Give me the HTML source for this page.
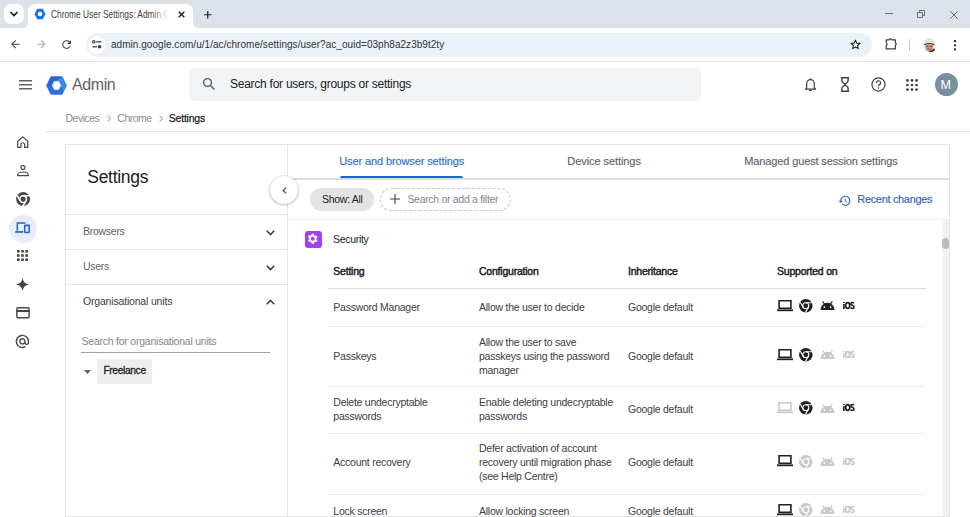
<!DOCTYPE html>
<html><head><meta charset="utf-8">
<style>
*{box-sizing:border-box;margin:0;padding:0}
html,body{width:970px;height:517px;overflow:hidden;background:#fff;font-family:"Liberation Sans",sans-serif;color:#202124}
.a{position:absolute;white-space:nowrap}
svg{position:absolute;overflow:visible}
</style></head><body>
<div class="a" style="left:0px;top:0px;width:970px;height:28px;background:#dce2ea;"></div>
<div class="a" style="left:4px;top:4px;width:20px;height:20px;background:#fbfcfd;border-radius:7px"></div>
<svg style="left:9px;top:10px" width="10" height="8" viewBox="0 0 10 8"><path d="M1.5 2 L5 5.5 L8.5 2" fill="none" stroke="#1f1f1f" stroke-width="1.7"/></svg>
<svg style="left:20px;top:4px" width="182" height="25" viewBox="0 0 182 25"><path d="M0 25 Q8 25 8 17 V8 Q8 0 16 0 H165 Q173 0 173 8 V17 Q173 25 181 25 Z" fill="#fff"/></svg>
<svg style="left:34px;top:8px" width="12" height="12" viewBox="0 0 24 24"><path d="M6.5 1.5 H17.5 L23 12 L17.5 22.5 H6.5 L1 12 Z" fill="#1a73e8"/><circle cx="12" cy="12" r="4.6" fill="#fff"/></svg>
<div class="a" style="left:51px;top:6px;width:120px;height:16px;overflow:hidden">
<div class="a" style="left:0px;top:2.47px;font-size:10.2px;line-height:14px;color:#3c4043;font-weight:400;letter-spacing:0px;transform:scaleX(0.82);transform-origin:0 0;">Chrome User Settings: Admin Console</div>
</div>
<div class="a" style="left:151px;top:6px;width:20px;height:16px;background:linear-gradient(90deg,rgba(255,255,255,0),#fff 90%);"></div>
<svg style="left:178px;top:11px" width="7" height="7" viewBox="0 0 7 7"><path d="M0.7 0.7 L6.3 6.3 M6.3 0.7 L0.7 6.3" stroke="#1f1f1f" stroke-width="1.4"/></svg>
<svg style="left:203.5px;top:10.7px" width="7.5" height="7.5" viewBox="0 0 7.5 7.5"><path d="M3.75 0 V7.5 M0 3.75 H7.5" stroke="#1f1f1f" stroke-width="1.2"/></svg>
<svg style="left:885px;top:13px" width="8" height="1" viewBox="0 0 8 1"><path d="M0 0.5 H8" stroke="#6b6e73" stroke-width="1"/></svg>
<svg style="left:917px;top:10px" width="8" height="8" viewBox="0 0 8 8"><path d="M0.5 2.5 H5.5 V7.5 H0.5 Z M2.5 2.5 V0.5 H7.5 V5.5 H5.5" fill="none" stroke="#6b6e73" stroke-width="1"/></svg>
<svg style="left:950px;top:10.5px" width="8" height="8" viewBox="0 0 8 8"><path d="M0.3 0.3 L7.7 7.7 M7.7 0.3 L0.3 7.7" stroke="#6b6e73" stroke-width="1"/></svg>
<div class="a" style="left:0px;top:28px;width:970px;height:33px;background:#fff;border-radius:5px 5px 0 0"></div>
<div class="a" style="left:0px;top:61px;width:970px;height:1px;background:#e3e3e3;"></div>
<svg style="left:9.4px;top:38.2px" width="12.7" height="12.7" viewBox="0 0 24 24"><path d="M20 11H7.83l5.59-5.59L12 4l-8 8 8 8 1.41-1.41L7.83 13H20v-2z" fill="#474747"/></svg>
<svg style="left:34.9px;top:38.2px" width="12.7" height="12.7" viewBox="0 0 24 24"><path d="M4 11h12.17l-5.59-5.59L12 4l8 8-8 8-1.41-1.41L16.17 13H4v-2z" fill="#a8abaf"/></svg>
<svg style="left:60.1px;top:37.8px" width="13.2" height="13.2" viewBox="0 0 24 24"><path d="M17.65 6.35C16.2 4.9 14.21 4 12 4c-4.42 0-7.99 3.58-7.99 8s3.57 8 7.99 8c3.73 0 6.84-2.55 7.73-6h-2.08c-.82 2.33-3.04 4-5.65 4-3.31 0-6-2.69-6-6s2.69-6 6-6c1.66 0 3.14.69 4.22 1.78L13 11h7V4l-2.35 2.35z" fill="#474747"/></svg>
<div class="a" style="left:86px;top:33px;width:786px;height:23.5px;background:#ebf1f9;border-radius:12px"></div>
<div class="a" style="left:88px;top:36px;width:18px;height:18px;background:#fff;border-radius:9px"></div>
<svg style="left:92px;top:40px" width="10" height="9" viewBox="0 0 10 9"><circle cx="1.8" cy="1.8" r="1.2" fill="none" stroke="#3c4043" stroke-width="1.1"/><path d="M4.2 1.8 H9.5" stroke="#3c4043" stroke-width="1.3"/><path d="M0.5 6.8 H5" stroke="#3c4043" stroke-width="1.3"/><circle cx="7.6" cy="6.8" r="1.8" fill="#3c4043"/></svg>
<div class="a" style="left:111px;top:37.73px;font-size:10px;line-height:14px;color:#303236;font-weight:400;letter-spacing:0.04px;">admin.google.com/u/1/ac/chrome/settings/user?ac_ouid=03ph8a2z3b9t2ty</div>
<svg style="left:849.5px;top:39.3px" width="11" height="11" viewBox="0 0 24 24"><path d="M12 2.5 L14.8 9 L21.8 9.6 L16.5 14.2 L18.1 21 L12 17.4 L5.9 21 L7.5 14.2 L2.2 9.6 L9.2 9 Z" fill="none" stroke="#1f1f1f" stroke-width="2.3" stroke-linejoin="round"/></svg>
<svg style="left:884.5px;top:38.3px" width="12" height="12" viewBox="0 0 12 12"><path d="M1.2 1.9 H4 Q5.3 0 6.6 1.9 H10.4 V5 Q12.3 6 10.4 7 V10.8 H1.2 V7.6 Q3 6 1.2 4.4 Z" fill="none" stroke="#3c4043" stroke-width="1.25" stroke-linejoin="round"/></svg>
<div class="a" style="left:909px;top:39px;width:1px;height:12px;background:#c7c7c7;"></div>
<svg style="left:921.5px;top:37.5px" width="14.5" height="14.5" viewBox="0 0 30 30"><defs><clipPath id="cp"><circle cx="15" cy="15" r="15"/></clipPath></defs><g clip-path="url(#cp)"><rect width="30" height="30" fill="#f4f1ee"/><path d="M7 14 Q6 27 15 28 Q24 27 23 14 Z" fill="#c48f79"/><path d="M4 13 Q5 1 15 1 Q26 1 26 13 Q15 9 4 13 Z" fill="#e4e0dc"/><path d="M4 13 Q15 8 26 13 L26 15 Q15 10.5 4 15 Z" fill="#4a3a34"/><path d="M16 27 Q22 26 25 21 L30 30 H14 Z" fill="#211a18"/><rect x="9" y="16.5" width="4" height="1.6" fill="#4a3630"/><rect x="17" y="16.5" width="4" height="1.6" fill="#4a3630"/><path d="M11 22.5 Q15 24 19 22.5" stroke="#6b4537" stroke-width="1.2" fill="none"/></g></svg>
<svg style="left:952.5px;top:39.5px" width="4" height="11" viewBox="0 0 4 11"><circle cx="2" cy="1.2" r="1.15" fill="#1f1f1f"/><circle cx="2" cy="5.3" r="1.15" fill="#1f1f1f"/><circle cx="2" cy="9.4" r="1.15" fill="#1f1f1f"/></svg>
<svg style="left:19px;top:80px" width="13" height="9.5" viewBox="0 0 13 9.5"><path d="M0 0.8 H13 M0 4.75 H13 M0 8.7 H13" stroke="#5f6368" stroke-width="1.6"/></svg>
<svg style="left:46.3px;top:76px" width="21" height="19" viewBox="0 0 21 19"><path d="M5.2 1 H15.8 L20 9.5 L15.8 18 H5.2 L1 9.5 Z" fill="#2f6fe0" stroke="#2f6fe0" stroke-width="1.6" stroke-linejoin="round"/><path d="M5.2 1 H15.8 L17.5 4.5 L9 4.8 L6.5 9.5 H1 Z" fill="#2a66d8" stroke="#2a66d8" stroke-width="0" /><path d="M15.8 1 L20 9.5 L17.9 13.7 L13 9.5 L10.5 4.6 Z" fill="#4587f2"/><path d="M8.3 5.6 H12.7 L14.6 9.5 L12.7 13.4 H8.3 L6.4 9.5 Z" fill="#fff" stroke="#fff" stroke-width="0.6" stroke-linejoin="round"/></svg>
<div class="a" style="left:72px;top:73.96px;font-size:16px;line-height:22px;color:#5f6368;font-weight:400;letter-spacing:-0.4px;">Admin</div>
<div class="a" style="left:189px;top:68px;width:512px;height:33px;background:#f1f3f4;border-radius:5px"></div>
<svg style="left:202px;top:77px" width="14" height="14" viewBox="0 0 24 24"><circle cx="9.5" cy="9.5" r="6.8" fill="none" stroke="#5f6368" stroke-width="2.4"/><path d="M14.5 14.5 L21.5 21.5" stroke="#5f6368" stroke-width="2.6"/></svg>
<div class="a" style="left:230px;top:75.94px;font-size:12px;line-height:17px;color:#202124;font-weight:400;letter-spacing:-0.25px;">Search for users, groups or settings</div>
<svg style="left:804px;top:77px" width="13" height="15" viewBox="0 0 24 26"><path d="M5 19 V11 A7 7 0 0 1 19 11 V19 L21.5 21.5 H2.5 Z" fill="none" stroke="#3c4043" stroke-width="2.2" stroke-linejoin="round"/><path d="M12 1.5 V4" stroke="#3c4043" stroke-width="2.2"/><path d="M9.5 24 H14.5" stroke="#3c4043" stroke-width="2.4"/></svg>
<svg style="left:840px;top:77px" width="10" height="15" viewBox="0 0 16 24"><path d="M1.5 1.2 H14.5 M1.5 22.8 H14.5" stroke="#3c4043" stroke-width="2.4"/><path d="M3 1.2 V6 C3 9 8 10.5 8 12 C8 13.5 3 15 3 18 V22.8 M13 1.2 V6 C13 9 8 10.5 8 12 C8 13.5 13 15 13 18 V22.8" fill="none" stroke="#3c4043" stroke-width="2.2"/></svg>
<svg style="left:871px;top:77px" width="15" height="15" viewBox="0 0 24 24"><circle cx="12" cy="12" r="10.5" fill="none" stroke="#3c4043" stroke-width="1.9"/><path d="M8.6 9.4 A3.4 3.4 0 1 1 13.3 12.6 C12.5 13 12 13.6 12 14.6" fill="none" stroke="#3c4043" stroke-width="1.9"/><circle cx="12" cy="17.6" r="1.25" fill="#3c4043"/></svg>
<svg style="left:906px;top:79px" width="12" height="12" viewBox="0 0 12 12"><g fill="#3c4043"><circle cx="1.4" cy="1.4" r="1.35"/><circle cx="1.4" cy="6" r="1.35"/><circle cx="1.4" cy="10.6" r="1.35"/><circle cx="6" cy="1.4" r="1.35"/><circle cx="6" cy="6" r="1.35"/><circle cx="6" cy="10.6" r="1.35"/><circle cx="10.6" cy="1.4" r="1.35"/><circle cx="10.6" cy="6" r="1.35"/><circle cx="10.6" cy="10.6" r="1.35"/></g></svg>
<div class="a" style="left:935px;top:73px;width:23px;height:23px;background:#78909c;border-radius:50%"></div>
<div class="a" style="left:940.5px;top:76.37px;font-size:12.5px;line-height:18px;color:#fff;font-weight:400;letter-spacing:0px;">M</div>
<div class="a" style="left:65.5px;top:110.56px;font-size:10.5px;line-height:15px;color:#8a8e93;font-weight:400;letter-spacing:-0.5px;">Devices</div>
<svg style="left:106.5px;top:115px" width="5" height="7" viewBox="0 0 5 7"><path d="M0.8 0.6 L3.6 3.5 L0.8 6.4" fill="none" stroke="#8a8e93" stroke-width="1"/></svg>
<div class="a" style="left:117.3px;top:110.56px;font-size:10.5px;line-height:15px;color:#8a8e93;font-weight:400;letter-spacing:-0.5px;">Chrome</div>
<svg style="left:158.5px;top:115px" width="5" height="7" viewBox="0 0 5 7"><path d="M0.8 0.6 L3.6 3.5 L0.8 6.4" fill="none" stroke="#8a8e93" stroke-width="1"/></svg>
<div class="a" style="left:168.8px;top:110.56px;font-size:10.5px;line-height:15px;color:#202124;font-weight:400;letter-spacing:-0.22px;-webkit-text-stroke:0.25px #202124">Settings</div>
<div class="a" style="left:46px;top:131px;width:924px;height:1px;background:#e0e0e0;"></div>
<div class="a" style="left:8.75px;top:215.2px;width:28px;height:28px;background:#e9edfb;border-radius:50%"></div>
<svg style="left:17px;top:136px" width="11.5" height="12" viewBox="0 0 11.5 12"><path d="M0.7 5.2 L5.75 0.9 L10.8 5.2 V11.4 H7.6 V8.6 A1.85 1.85 0 0 0 3.9 8.6 V11.4 H0.7 Z" fill="none" stroke="#474747" stroke-width="1.2" stroke-linejoin="round"/></svg>
<svg style="left:17px;top:165px" width="12" height="11.5" viewBox="0 0 12 11.5"><circle cx="6" cy="2.55" r="2" fill="none" stroke="#474747" stroke-width="1.2"/><path d="M0.7 10.7 V9.8 C0.7 8 3.4 7 6 7 C8.6 7 11.3 8 11.3 9.8 V10.7 Z" fill="none" stroke="#474747" stroke-width="1.2" stroke-linejoin="round"/></svg>
<svg style="left:15.5px;top:191.8px" width="14.2" height="14.2" viewBox="0 0 24 24"><circle cx="12" cy="12" r="11.8" fill="#474747"/><circle cx="12" cy="12" r="5.6" fill="none" stroke="#fff" stroke-width="2.6"/><circle cx="12" cy="12" r="3.6" fill="#474747"/><path d="M12 6.3 H23.5" stroke="#fff" stroke-width="2.6"/><path d="M7.1 14.9 L1.4 5" stroke="#fff" stroke-width="2.6"/><path d="M16.9 14.9 L11.2 24.5" stroke="#fff" stroke-width="2.6"/></svg>
<svg style="left:15px;top:222px" width="15" height="11" viewBox="0 0 24 18"><path d="M3.5 14 V1.5 H17" fill="none" stroke="#1967d2" stroke-width="2.5"/><path d="M0 16.3 H13" stroke="#1967d2" stroke-width="2.8"/><rect x="15.6" y="5.5" width="7.2" height="11.6" rx="0.6" fill="none" stroke="#1967d2" stroke-width="2.5"/></svg>
<svg style="left:17px;top:250px" width="11" height="11" viewBox="0 0 11 11"><g fill="#474747"><rect x="0" y="0" width="2.6" height="2.6"/><rect x="0" y="4.2" width="2.6" height="2.6"/><rect x="0" y="8.4" width="2.6" height="2.6"/><rect x="4.2" y="0" width="2.6" height="2.6"/><rect x="4.2" y="4.2" width="2.6" height="2.6"/><rect x="4.2" y="8.4" width="2.6" height="2.6"/><rect x="8.4" y="0" width="2.6" height="2.6"/><rect x="8.4" y="4.2" width="2.6" height="2.6"/><rect x="8.4" y="8.4" width="2.6" height="2.6"/></g></svg>
<svg style="left:16px;top:278px" width="13" height="13" viewBox="0 0 24 24"><path d="M12 0 C13 7 17 11 24 12 C17 13 13 17 12 24 C11 17 7 13 0 12 C7 11 11 7 12 0 Z" fill="#474747"/></svg>
<svg style="left:15.5px;top:306.5px" width="14" height="11.5" viewBox="0 0 24 20"><rect x="1.3" y="1.3" width="21.4" height="17.4" rx="2" fill="none" stroke="#474747" stroke-width="2.5"/><path d="M1 7 H23" stroke="#474747" stroke-width="3.6"/></svg>
<svg style="left:15.3px;top:334px" width="14.8" height="14.8" viewBox="0 0 24 24"><path d="M16.2 12 A4.2 4.2 0 1 1 16.2 11.9 V14 A2.7 2.7 0 0 0 21.8 14 V12 A9.8 9.8 0 1 0 16.8 20.6" fill="none" stroke="#474747" stroke-width="2.3"/></svg>
<div class="a" style="left:65px;top:144px;width:885px;height:380px;background:transparent;border:1px solid #e4e4e4;box-sizing:border-box"></div>
<div class="a" style="left:287px;top:144px;width:1px;height:380px;background:#e4e4e4;"></div>
<div class="a" style="left:87.3px;top:164.54px;font-size:17.5px;line-height:24px;color:#202124;font-weight:400;letter-spacing:-0.3px;">Settings</div>
<div class="a" style="left:65px;top:214px;width:222px;height:1px;background:#e4e4e4;"></div>
<div class="a" style="left:65px;top:249px;width:222px;height:1px;background:#e4e4e4;"></div>
<div class="a" style="left:65px;top:284px;width:222px;height:1px;background:#e4e4e4;"></div>
<div class="a" style="left:83px;top:224.16px;font-size:10.5px;line-height:15px;color:#5f6368;font-weight:400;letter-spacing:-0.27px;">Browsers</div>
<div class="a" style="left:83px;top:259.16px;font-size:10.5px;line-height:15px;color:#5f6368;font-weight:400;letter-spacing:-0.27px;">Users</div>
<div class="a" style="left:83px;top:293.86px;font-size:10.5px;line-height:15px;color:#3c4043;font-weight:400;letter-spacing:-0.18px;">Organisational units</div>
<svg style="left:265.5px;top:229.5px" width="9" height="6" viewBox="0 0 9 6"><path d="M0.8 0.8 L4.5 4.5 L8.2 0.8" fill="none" stroke="#3c4043" stroke-width="1.6"/></svg>
<svg style="left:265.5px;top:264.5px" width="9" height="6" viewBox="0 0 9 6"><path d="M0.8 0.8 L4.5 4.5 L8.2 0.8" fill="none" stroke="#3c4043" stroke-width="1.6"/></svg>
<svg style="left:265.5px;top:298.5px" width="9" height="6" viewBox="0 0 9 6"><path d="M0.8 5.2 L4.5 1.5 L8.2 5.2" fill="none" stroke="#3c4043" stroke-width="1.6"/></svg>
<div class="a" style="left:81.5px;top:334.26px;font-size:10.5px;line-height:15px;color:#80868b;font-weight:400;letter-spacing:-0.23px;">Search for organisational units</div>
<div class="a" style="left:81px;top:352px;width:189px;height:1px;background:#9aa0a6;"></div>
<svg style="left:84px;top:370px" width="7" height="4" viewBox="0 0 7 4"><path d="M0 0 H7 L3.5 4 Z" fill="#5f6368"/></svg>
<div class="a" style="left:97px;top:358.5px;width:55px;height:25.5px;background:#eeeeee;"></div>
<div class="a" style="left:103.4px;top:363.87px;font-size:10.2px;line-height:14px;color:#202124;font-weight:400;letter-spacing:-0.33px;-webkit-text-stroke:0.3px #202124">Freelance</div>
<div class="a" style="left:288px;top:178px;width:661px;height:1.5px;background:#dcdcdc;"></div>
<div class="a" style="left:339.3px;top:153.79px;font-size:11px;line-height:15px;color:#2a6fd8;font-weight:400;letter-spacing:-0.12px;-webkit-text-stroke:0.15px #2a6fd8">User and browser settings</div>
<div class="a" style="left:339.5px;top:175.7px;width:123px;height:2.8px;background:#1b67d3;border-radius:3px 3px 0 0"></div>
<div class="a" style="left:567.3px;top:153.79px;font-size:11px;line-height:15px;color:#5f6368;font-weight:400;letter-spacing:-0.07px;-webkit-text-stroke:0.15px #5f6368">Device settings</div>
<div class="a" style="left:744.3px;top:153.79px;font-size:11px;line-height:15px;color:#5f6368;font-weight:400;letter-spacing:-0.13px;-webkit-text-stroke:0.15px #5f6368">Managed guest session settings</div>
<div class="a" style="left:310px;top:188px;width:63.5px;height:22.5px;background:#e3e3e3;border-radius:12px"></div>
<div class="a" style="left:322px;top:191.66px;font-size:10.5px;line-height:15px;color:#202124;font-weight:400;letter-spacing:-0.3px;">Show: All</div>
<div class="a" style="left:379.5px;top:188px;width:131px;height:22.5px;background:transparent;border:1px dashed #c6c6c6;border-radius:12px;box-sizing:border-box"></div>
<svg style="left:389.5px;top:194px" width="10" height="10" viewBox="0 0 10 10"><path d="M5 0 V10 M0 5 H10" stroke="#3c4043" stroke-width="1.1"/></svg>
<div class="a" style="left:407.4px;top:191.66px;font-size:10.5px;line-height:15px;color:#80868b;font-weight:400;letter-spacing:-0.3px;">Search or add a filter</div>
<svg style="left:838.4px;top:193.5px" width="13.5" height="13.5" viewBox="0 0 24 24"><path fill="#3560c4" d="M13 3c-4.97 0-9 4.03-9 9H1l3.89 3.89.07.14L9 12H6c0-3.87 3.13-7 7-7s7 3.13 7 7-3.13 7-7 7c-1.93 0-3.68-.79-4.94-2.06l-1.42 1.42C8.27 19.99 10.51 21 13 21c4.97 0 9-4.03 9-9s-4.03-9-9-9zm-1 5v5l4.28 2.54.72-1.21-3.5-2.08V8H12z"/></svg>
<div class="a" style="left:857.3px;top:192.29px;font-size:11px;line-height:15px;color:#3560c4;font-weight:400;letter-spacing:-0.33px;-webkit-text-stroke:0.15px #3560c4">Recent changes</div>
<div class="a" style="left:288px;top:218.5px;width:661px;height:1px;background:#e8eaed;"></div>
<div class="a" style="left:942.5px;top:219.5px;width:6.5px;height:297px;background:#f1f1f1;"></div>
<div class="a" style="left:65px;top:516px;width:885px;height:1px;background:#e4e4e4;"></div>
<div class="a" style="left:942px;top:237.5px;width:7px;height:11px;background:#bcbcbc;border-radius:3.5px"></div>
<div class="a" style="left:304.5px;top:230.5px;width:17px;height:17px;background:#a142f4;border-radius:3px"></div>
<svg style="left:306.3px;top:232.4px" width="13.4" height="13.4" viewBox="0 0 24 24"><path fill="#fff" d="M19.4 13a7.6 7.6 0 0 0 0-2l2.1-1.6-2-3.5-2.5 1a7.3 7.3 0 0 0-1.7-1L15 3h-4l-.4 2.6a7.3 7.3 0 0 0-1.7 1l-2.5-1-2 3.5L6.6 11a7.6 7.6 0 0 0 0 2l-2.1 1.6 2 3.5 2.5-1a7.3 7.3 0 0 0 1.7 1L11 21h4l.4-2.6a7.3 7.3 0 0 0 1.7-1l2.5 1 2-3.5zM13 15.5a3.5 3.5 0 1 1 0-7 3.5 3.5 0 0 1 0 7z" transform="translate(-1 0)"/></svg>
<div class="a" style="left:333px;top:231.66px;font-size:10.5px;line-height:15px;color:#202124;font-weight:400;letter-spacing:-0.3px;">Security</div>
<div class="a" style="left:333.3px;top:264.16px;font-size:10.5px;line-height:15px;color:#202124;font-weight:400;letter-spacing:-0.22px;-webkit-text-stroke:0.45px #202124">Setting</div>
<div class="a" style="left:479px;top:264.16px;font-size:10.5px;line-height:15px;color:#202124;font-weight:400;letter-spacing:-0.22px;-webkit-text-stroke:0.45px #202124">Configuration</div>
<div class="a" style="left:628px;top:264.16px;font-size:10.5px;line-height:15px;color:#202124;font-weight:400;letter-spacing:-0.22px;-webkit-text-stroke:0.45px #202124">Inheritance</div>
<div class="a" style="left:777px;top:264.16px;font-size:10.5px;line-height:15px;color:#202124;font-weight:400;letter-spacing:-0.22px;-webkit-text-stroke:0.45px #202124">Supported on</div>
<div class="a" style="left:328px;top:288px;width:598px;height:1px;background:#dadce0;"></div>
<div class="a" style="left:328px;top:326px;width:598px;height:1px;background:#e8eaed;"></div>
<div class="a" style="left:328px;top:386px;width:598px;height:1px;background:#e8eaed;"></div>
<div class="a" style="left:328px;top:432.5px;width:598px;height:1px;background:#e8eaed;"></div>
<div class="a" style="left:328px;top:493.5px;width:598px;height:1px;background:#e8eaed;"></div>
<div class="a" style="left:333.3px;top:299.76px;font-size:10.5px;line-height:15px;color:#3c4043;font-weight:400;letter-spacing:-0.25px;">Password Manager</div>
<div class="a" style="left:479px;top:299.76px;font-size:10.5px;line-height:15px;color:#3c4043;font-weight:400;letter-spacing:-0.25px;">Allow the user to decide</div>
<div class="a" style="left:628px;top:299.76px;font-size:10.5px;line-height:15px;color:#3c4043;font-weight:400;letter-spacing:-0.25px;">Google default</div>
<div class="a" style="left:333.3px;top:348.76px;font-size:10.5px;line-height:15px;color:#3c4043;font-weight:400;letter-spacing:-0.25px;">Passkeys</div>
<div class="a" style="left:479px;top:334.76px;font-size:10.5px;line-height:15px;color:#3c4043;font-weight:400;letter-spacing:-0.25px;">Allow the user to save</div>
<div class="a" style="left:479px;top:348.76px;font-size:10.5px;line-height:15px;color:#3c4043;font-weight:400;letter-spacing:-0.25px;">passkeys using the password</div>
<div class="a" style="left:479px;top:362.76px;font-size:10.5px;line-height:15px;color:#3c4043;font-weight:400;letter-spacing:-0.25px;">manager</div>
<div class="a" style="left:628px;top:348.76px;font-size:10.5px;line-height:15px;color:#3c4043;font-weight:400;letter-spacing:-0.25px;">Google default</div>
<div class="a" style="left:333.3px;top:394.86px;font-size:10.5px;line-height:15px;color:#3c4043;font-weight:400;letter-spacing:-0.25px;">Delete undecryptable</div>
<div class="a" style="left:333.3px;top:408.86px;font-size:10.5px;line-height:15px;color:#3c4043;font-weight:400;letter-spacing:-0.25px;">passwords</div>
<div class="a" style="left:479px;top:394.86px;font-size:10.5px;line-height:15px;color:#3c4043;font-weight:400;letter-spacing:-0.25px;">Enable deleting undecryptable</div>
<div class="a" style="left:479px;top:408.86px;font-size:10.5px;line-height:15px;color:#3c4043;font-weight:400;letter-spacing:-0.25px;">passwords</div>
<div class="a" style="left:628px;top:401.86px;font-size:10.5px;line-height:15px;color:#3c4043;font-weight:400;letter-spacing:-0.25px;">Google default</div>
<div class="a" style="left:333.3px;top:455.16px;font-size:10.5px;line-height:15px;color:#3c4043;font-weight:400;letter-spacing:-0.25px;">Account recovery</div>
<div class="a" style="left:479px;top:441.16px;font-size:10.5px;line-height:15px;color:#3c4043;font-weight:400;letter-spacing:-0.25px;">Defer activation of account</div>
<div class="a" style="left:479px;top:455.16px;font-size:10.5px;line-height:15px;color:#3c4043;font-weight:400;letter-spacing:-0.25px;">recovery until migration phase</div>
<div class="a" style="left:479px;top:469.16px;font-size:10.5px;line-height:15px;color:#3c4043;font-weight:400;letter-spacing:-0.25px;">(see Help Centre)</div>
<div class="a" style="left:628px;top:455.16px;font-size:10.5px;line-height:15px;color:#3c4043;font-weight:400;letter-spacing:-0.25px;">Google default</div>
<div class="a" style="left:333.3px;top:503.86px;font-size:10.5px;line-height:15px;color:#3c4043;font-weight:400;letter-spacing:-0.25px;">Lock screen</div>
<div class="a" style="left:479px;top:503.86px;font-size:10.5px;line-height:15px;color:#3c4043;font-weight:400;letter-spacing:-0.25px;">Allow locking screen</div>
<div class="a" style="left:628px;top:503.86px;font-size:10.5px;line-height:15px;color:#3c4043;font-weight:400;letter-spacing:-0.25px;">Google default</div>
<svg style="left:777px;top:299.7px" width="16" height="11.5" viewBox="0 0 16 11.5"><path d="M2.1 0.8 H13.9 V8.2 H2.1 Z" fill="none" stroke="#202124" stroke-width="1.6"/><path d="M0 9.4 H16 V11.2 H0 Z" fill="#202124"/></svg>
<svg style="left:799.4px;top:298.8px" width="13.6" height="13.6" viewBox="0 0 24 24"><circle cx="12" cy="12" r="12" fill="#202124"/><circle cx="12" cy="12" r="5.3" fill="none" stroke="#fff" stroke-width="1.9"/><path d="M12 6.7 H22.5 M7.4 14.65 L2.2 5.7 M16.6 14.65 L11.4 23.6" stroke="#fff" stroke-width="1.9"/></svg>
<svg style="left:820px;top:301.0px" width="15" height="9" viewBox="0 0 24 14.5"><path d="M0.5 14.5 A11.5 11.5 0 0 1 23.5 14.5 Z" fill="#202124"/><path d="M4.2 0.6 L7.2 5 M19.8 0.6 L16.8 5" stroke="#202124" stroke-width="1.8"/><circle cx="7" cy="10" r="1.4" fill="#fff"/><circle cx="17" cy="10" r="1.4" fill="#fff"/></svg>
<svg style="left:843px;top:301.8px" width="12" height="7" viewBox="0 0 12 7"><path d="M0.9 0 V1 M0.9 2 V7" stroke="#202124" stroke-width="1.6"/><ellipse cx="4.7" cy="3.5" rx="2.05" ry="2.8" fill="none" stroke="#202124" stroke-width="1.7"/><path d="M10.9 1.3 C10.4 0.6 9.9 0.5 9.3 0.5 C8.3 0.5 7.8 1.1 7.8 1.9 C7.8 3.6 11 3 11 5.1 C11 6.1 10.3 6.5 9.3 6.5 C8.5 6.5 8 6.2 7.5 5.6" fill="none" stroke="#202124" stroke-width="1.6"/></svg>
<svg style="left:777px;top:348.7px" width="16" height="11.5" viewBox="0 0 16 11.5"><path d="M2.1 0.8 H13.9 V8.2 H2.1 Z" fill="none" stroke="#202124" stroke-width="1.6"/><path d="M0 9.4 H16 V11.2 H0 Z" fill="#202124"/></svg>
<svg style="left:799.4px;top:347.8px" width="13.6" height="13.6" viewBox="0 0 24 24"><circle cx="12" cy="12" r="12" fill="#202124"/><circle cx="12" cy="12" r="5.3" fill="none" stroke="#fff" stroke-width="1.9"/><path d="M12 6.7 H22.5 M7.4 14.65 L2.2 5.7 M16.6 14.65 L11.4 23.6" stroke="#fff" stroke-width="1.9"/></svg>
<svg style="left:820px;top:350.0px" width="15" height="9" viewBox="0 0 24 14.5"><path d="M0.5 14.5 A11.5 11.5 0 0 1 23.5 14.5 Z" fill="#c8c8c8"/><path d="M4.2 0.6 L7.2 5 M19.8 0.6 L16.8 5" stroke="#c8c8c8" stroke-width="1.8"/><circle cx="7" cy="10" r="1.4" fill="#fff"/><circle cx="17" cy="10" r="1.4" fill="#fff"/></svg>
<svg style="left:843px;top:350.8px" width="12" height="7" viewBox="0 0 12 7"><path d="M0.9 0 V1 M0.9 2 V7" stroke="#c8c8c8" stroke-width="1.6"/><ellipse cx="4.7" cy="3.5" rx="2.05" ry="2.8" fill="none" stroke="#c8c8c8" stroke-width="1.7"/><path d="M10.9 1.3 C10.4 0.6 9.9 0.5 9.3 0.5 C8.3 0.5 7.8 1.1 7.8 1.9 C7.8 3.6 11 3 11 5.1 C11 6.1 10.3 6.5 9.3 6.5 C8.5 6.5 8 6.2 7.5 5.6" fill="none" stroke="#c8c8c8" stroke-width="1.6"/></svg>
<svg style="left:777px;top:402.2px" width="16" height="11.5" viewBox="0 0 16 11.5"><path d="M2.1 0.8 H13.9 V8.2 H2.1 Z" fill="none" stroke="#c8c8c8" stroke-width="1.6"/><path d="M0 9.4 H16 V11.2 H0 Z" fill="#c8c8c8"/></svg>
<svg style="left:799.4px;top:401.3px" width="13.6" height="13.6" viewBox="0 0 24 24"><circle cx="12" cy="12" r="12" fill="#202124"/><circle cx="12" cy="12" r="5.3" fill="none" stroke="#fff" stroke-width="1.9"/><path d="M12 6.7 H22.5 M7.4 14.65 L2.2 5.7 M16.6 14.65 L11.4 23.6" stroke="#fff" stroke-width="1.9"/></svg>
<svg style="left:820px;top:403.5px" width="15" height="9" viewBox="0 0 24 14.5"><path d="M0.5 14.5 A11.5 11.5 0 0 1 23.5 14.5 Z" fill="#c8c8c8"/><path d="M4.2 0.6 L7.2 5 M19.8 0.6 L16.8 5" stroke="#c8c8c8" stroke-width="1.8"/><circle cx="7" cy="10" r="1.4" fill="#fff"/><circle cx="17" cy="10" r="1.4" fill="#fff"/></svg>
<svg style="left:843px;top:404.3px" width="12" height="7" viewBox="0 0 12 7"><path d="M0.9 0 V1 M0.9 2 V7" stroke="#202124" stroke-width="1.6"/><ellipse cx="4.7" cy="3.5" rx="2.05" ry="2.8" fill="none" stroke="#202124" stroke-width="1.7"/><path d="M10.9 1.3 C10.4 0.6 9.9 0.5 9.3 0.5 C8.3 0.5 7.8 1.1 7.8 1.9 C7.8 3.6 11 3 11 5.1 C11 6.1 10.3 6.5 9.3 6.5 C8.5 6.5 8 6.2 7.5 5.6" fill="none" stroke="#202124" stroke-width="1.6"/></svg>
<svg style="left:777px;top:455.4px" width="16" height="11.5" viewBox="0 0 16 11.5"><path d="M2.1 0.8 H13.9 V8.2 H2.1 Z" fill="none" stroke="#202124" stroke-width="1.6"/><path d="M0 9.4 H16 V11.2 H0 Z" fill="#202124"/></svg>
<svg style="left:799.4px;top:454.5px" width="13.6" height="13.6" viewBox="0 0 24 24"><circle cx="12" cy="12" r="12" fill="#c8c8c8"/><circle cx="12" cy="12" r="5.3" fill="none" stroke="#fff" stroke-width="1.9"/><path d="M12 6.7 H22.5 M7.4 14.65 L2.2 5.7 M16.6 14.65 L11.4 23.6" stroke="#fff" stroke-width="1.9"/></svg>
<svg style="left:820px;top:456.7px" width="15" height="9" viewBox="0 0 24 14.5"><path d="M0.5 14.5 A11.5 11.5 0 0 1 23.5 14.5 Z" fill="#c8c8c8"/><path d="M4.2 0.6 L7.2 5 M19.8 0.6 L16.8 5" stroke="#c8c8c8" stroke-width="1.8"/><circle cx="7" cy="10" r="1.4" fill="#fff"/><circle cx="17" cy="10" r="1.4" fill="#fff"/></svg>
<svg style="left:843px;top:457.5px" width="12" height="7" viewBox="0 0 12 7"><path d="M0.9 0 V1 M0.9 2 V7" stroke="#c8c8c8" stroke-width="1.6"/><ellipse cx="4.7" cy="3.5" rx="2.05" ry="2.8" fill="none" stroke="#c8c8c8" stroke-width="1.7"/><path d="M10.9 1.3 C10.4 0.6 9.9 0.5 9.3 0.5 C8.3 0.5 7.8 1.1 7.8 1.9 C7.8 3.6 11 3 11 5.1 C11 6.1 10.3 6.5 9.3 6.5 C8.5 6.5 8 6.2 7.5 5.6" fill="none" stroke="#c8c8c8" stroke-width="1.6"/></svg>
<svg style="left:777px;top:504.09999999999997px" width="16" height="11.5" viewBox="0 0 16 11.5"><path d="M2.1 0.8 H13.9 V8.2 H2.1 Z" fill="none" stroke="#202124" stroke-width="1.6"/><path d="M0 9.4 H16 V11.2 H0 Z" fill="#202124"/></svg>
<svg style="left:799.4px;top:503.2px" width="13.6" height="13.6" viewBox="0 0 24 24"><circle cx="12" cy="12" r="12" fill="#c8c8c8"/><circle cx="12" cy="12" r="5.3" fill="none" stroke="#fff" stroke-width="1.9"/><path d="M12 6.7 H22.5 M7.4 14.65 L2.2 5.7 M16.6 14.65 L11.4 23.6" stroke="#fff" stroke-width="1.9"/></svg>
<svg style="left:820px;top:505.4px" width="15" height="9" viewBox="0 0 24 14.5"><path d="M0.5 14.5 A11.5 11.5 0 0 1 23.5 14.5 Z" fill="#c8c8c8"/><path d="M4.2 0.6 L7.2 5 M19.8 0.6 L16.8 5" stroke="#c8c8c8" stroke-width="1.8"/><circle cx="7" cy="10" r="1.4" fill="#fff"/><circle cx="17" cy="10" r="1.4" fill="#fff"/></svg>
<svg style="left:843px;top:506.2px" width="12" height="7" viewBox="0 0 12 7"><path d="M0.9 0 V1 M0.9 2 V7" stroke="#c8c8c8" stroke-width="1.6"/><ellipse cx="4.7" cy="3.5" rx="2.05" ry="2.8" fill="none" stroke="#c8c8c8" stroke-width="1.7"/><path d="M10.9 1.3 C10.4 0.6 9.9 0.5 9.3 0.5 C8.3 0.5 7.8 1.1 7.8 1.9 C7.8 3.6 11 3 11 5.1 C11 6.1 10.3 6.5 9.3 6.5 C8.5 6.5 8 6.2 7.5 5.6" fill="none" stroke="#c8c8c8" stroke-width="1.6"/></svg>
<div class="a" style="left:270px;top:176px;width:28px;height:28px;background:#fff;border-radius:50%;box-shadow:0 0 0 1px rgba(0,0,0,.08),0 1px 3px rgba(60,64,67,.3)"></div>
<svg style="left:282px;top:187px" width="5" height="7" viewBox="0 0 5 7"><path d="M4.2 0.6 L1 3.5 L4.2 6.4" fill="none" stroke="#3c4043" stroke-width="1.1"/></svg>
</body></html>
